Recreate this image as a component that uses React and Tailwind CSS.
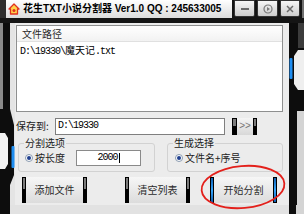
import React from "react";

function LeftFrame() {
  return (
    <svg width="15" height="182" viewBox="0 0 15 182" className="block shrink-0">
      <rect width="15" height="182" fill="#e4e4e4" />
      <polygon points="0,0 10,0 10,86 14,102 14,152 10,162 10,182 0,182" fill="#0d0d0d" />
      <rect x="0" y="0" width="3" height="86" fill="#8a8a8a" />
      <polygon points="0,110 5,110 8,115 8,141 5,146 0,146" fill="#f2f2f2" />
      <rect x="11.5" y="123" width="3" height="22" rx="1" fill="#1f8ef1" />
    </svg>
  );
}

function RightFrame() {
  return (
    <svg width="15" height="182" viewBox="0 0 15 182" className="block shrink-0">
      <rect width="15" height="182" fill="#0d0d0d" />
      <rect x="9" y="0" width="6" height="25" fill="#3c3c3c" />
      <polygon points="9,27 15,27 15,67 9,67 5,61 5,33" fill="#efefef" />
      <rect x="0.5" y="35" width="3" height="21" rx="1" fill="#1f8ef1" />
      <rect x="8" y="88" width="7" height="94" fill="#d4d4d4" />
    </svg>
  );
}

function WinBtn({ className, children }) {
  return (
    <div
      className={
        "h-[17px] flex items-center justify-center border border-[#333] rounded-b-[2px] bg-gradient-to-b from-[#f6f6f6] to-[#cdcdcd] " +
        className
      }
    >
      {children}
    </div>
  );
}

function Radio() {
  return (
    <div className="w-[8px] h-[8px] rounded-full border border-[#8a9bb0] bg-white flex items-center justify-center shrink-0">
      <div className="w-[4px] h-[4px] rounded-full bg-[#1f3f8f]" />
    </div>
  );
}

function SkinButton({ className, blue, children }) {
  const bar = blue
    ? "w-[4px] h-full border border-black bg-gradient-to-b from-[#0f5fb0] via-[#36a7ff] to-[#0f5fb0]"
    : "w-[4px] h-full border border-black bg-[linear-gradient(to_bottom,#7a7a7a_45%,#000_45%)]";
  return (
    <div className={"flex h-[26px] " + className}>
      <div className={bar} />
      <div className="flex-1 flex items-center justify-center bg-gradient-to-b from-[#f6f6f6] to-[#dcdcdc] text-[10px] leading-none text-[#2a2a2a]">
        {children}
      </div>
      <div className={bar} />
    </div>
  );
}

export default function App() {
  return (
    <div className="relative w-[304px] h-[214px] overflow-hidden bg-[#111] flex flex-col font-['Noto_Sans_CJK_SC',sans-serif]">
      {/* title bar */}
      <div className="h-[18px] flex shrink-0">
        <div className="w-[6px] bg-[#2e2e2e]" />
        <div className="w-[226px] flex items-center pl-[2px] gap-[3px] bg-gradient-to-b from-[#ffffff] to-[#dcdcdc]">
          <svg width="12" height="12" viewBox="0 0 12 12" className="shrink-0">
            <path d="M6 1 L11 6 L9.5 6 L9.5 11 L2.5 11 L2.5 6 L1 6 Z" fill="#ffd24a" stroke="#e0301e" strokeWidth="1.3" strokeLinejoin="round" />
            <circle cx="6" cy="7.5" r="1.5" fill="#e0301e" />
          </svg>
          <span className="font-['Liberation_Sans','Noto_Sans_CJK_SC',sans-serif] font-bold text-[10px] leading-none text-black whitespace-nowrap">
            花生TXT小说分割器 Ver1.0 QQ : 245633005
          </span>
        </div>
        <div className="flex-1 bg-[#141414] flex items-start pl-[2px] gap-[2px]">
          <WinBtn className="w-[21px]">
            <div className="w-[8px] h-[2px] bg-[#6a6a6a]" />
          </WinBtn>
          <WinBtn className="w-[21px]">
            <svg width="10" height="10" viewBox="0 0 10 10">
              <circle cx="5" cy="5" r="4" fill="none" stroke="#7a7a7a" strokeWidth="1.2" />
              <path d="M4 3 L7 5 L4 7 Z" fill="#7a7a7a" />
            </svg>
          </WinBtn>
          <WinBtn className="w-[20px]">
            <svg width="8" height="8" viewBox="0 0 8 8">
              <path d="M1 1 L7 7 M7 1 L1 7" stroke="#6a6a6a" strokeWidth="1.5" />
            </svg>
          </WinBtn>
          <div className="flex-1 h-[18px] bg-[#707070]" />
        </div>
      </div>
      <div className="h-[5px] shrink-0 bg-[#151515]" />

      {/* body */}
      <div className="flex h-[182px] shrink-0">
        <LeftFrame />
        <div className="w-[274px] h-[182px] bg-[#ececec] flex flex-col">
          {/* list box */}
          <div className="ml-[1px] mt-[2px] w-[267px] h-[87px] bg-white border border-[#8e8f8f] flex flex-col">
            <div className="h-[16px] border-b border-[#e0e0e0] bg-gradient-to-b from-white to-[#f2f2f2] flex items-center pl-[5px] text-[10px] leading-none text-[#2b2b2b]">
              文件路径
            </div>
            <div className="pl-[3px] pt-[3px] text-[10px] leading-none text-black flex items-baseline whitespace-nowrap">
              <span className="font-['Liberation_Mono',monospace] tracking-[-1px]">D:\19330\</span>
              <span>魔天记</span>
              <span className="font-['Liberation_Mono',monospace] tracking-[-1px]">.txt</span>
            </div>
          </div>

          {/* save row */}
          <div className="mt-[5px] h-[18px] flex items-center">
            <div className="ml-[1px] w-[39px] text-[10px] leading-none text-[#1a1a1a] whitespace-nowrap">保存到:</div>
            <div className="w-[170px] h-[17px] bg-white border border-[#7f7f7f] flex items-center pl-[2px] text-[10px] leading-none font-['Liberation_Mono',monospace] tracking-[-1px] text-black">
              D:\19330
            </div>
            <div className="ml-[7px] w-[25px] h-[17px] flex">
              <div className="w-[5px] h-full border border-black bg-[linear-gradient(to_bottom,#7a7a7a_45%,#000_45%)]" />
              <div className="flex-1 flex items-center justify-center bg-gradient-to-b from-[#f4f4f4] to-[#d8d8d8] text-[10px] leading-none text-[#777] font-['Liberation_Sans',sans-serif]">
                &gt;&gt;
              </div>
              <div className="w-[4px] h-full border border-black bg-[linear-gradient(to_bottom,#7a7a7a_45%,#000_45%)]" />
            </div>
          </div>

          {/* groups */}
          <div className="mt-[3px] h-[34px] flex items-start">
            <div className="ml-[3px] mt-[5px] w-[137px] h-[29px] border border-[#d2d2d2] rounded-[3px] flex flex-col">
              <div className="-mt-[6px] ml-[5px] px-[1px] bg-[#ececec] self-start text-[10px] leading-[10px] text-[#222]">
                分割选项
              </div>
              <div className="mt-[2px] h-[16px] flex items-center pl-[6px]">
                <Radio />
                <span className="ml-[2px] text-[10px] leading-none text-[#222]">按长度</span>
                <div className="ml-[11px] w-[65px] h-[16px] bg-white border border-[#8a8a8a] flex items-center justify-center text-[10px] leading-none font-['Liberation_Mono',monospace] tracking-[-1px] text-black">
                  2000<span className="ml-[1px] w-[1px] h-[10px] bg-black" />
                </div>
              </div>
            </div>
            <div className="ml-[12px] mt-[5px] w-[116px] h-[29px] border border-[#d2d2d2] rounded-[3px] flex flex-col">
              <div className="-mt-[6px] ml-[5px] px-[1px] bg-[#ececec] self-start text-[10px] leading-[10px] text-[#222]">
                生成选择
              </div>
              <div className="mt-[2px] h-[16px] flex items-center pl-[7px]">
                <Radio />
                <span className="ml-[2px] text-[10px] leading-none text-[#222] whitespace-nowrap">文件名+序号</span>
              </div>
            </div>
          </div>

          {/* buttons */}
          <div className="mt-[5px] flex">
            <SkinButton className="ml-[7px] w-[65px]">添加文件</SkinButton>
            <SkinButton className="ml-[38px] w-[65px]">清空列表</SkinButton>
            <SkinButton className="ml-[20px] w-[67px]" blue>开始分割</SkinButton>
          </div>
        </div>
        <RightFrame />
      </div>

      {/* bottom */}
      <div className="flex h-[9px] shrink-0">
        <div className="w-[10px] bg-[#0d0d0d]" />
        <div className="flex-1 bg-[#e2e2e2]" />
        <div className="w-[7px] bg-[#0d0d0d]" />
        <div className="w-[8px] bg-[#d4d4d4]" />
      </div>

      {/* red annotation ellipse */}
      <svg className="absolute left-[199px] top-[163px] pointer-events-none" width="90" height="50" viewBox="0 0 90 50">
        <ellipse cx="44" cy="24" rx="41.5" ry="21" fill="none" stroke="#e3201b" strokeWidth="1.8" transform="rotate(-5 44 24)" />
      </svg>
    </div>
  );
}
